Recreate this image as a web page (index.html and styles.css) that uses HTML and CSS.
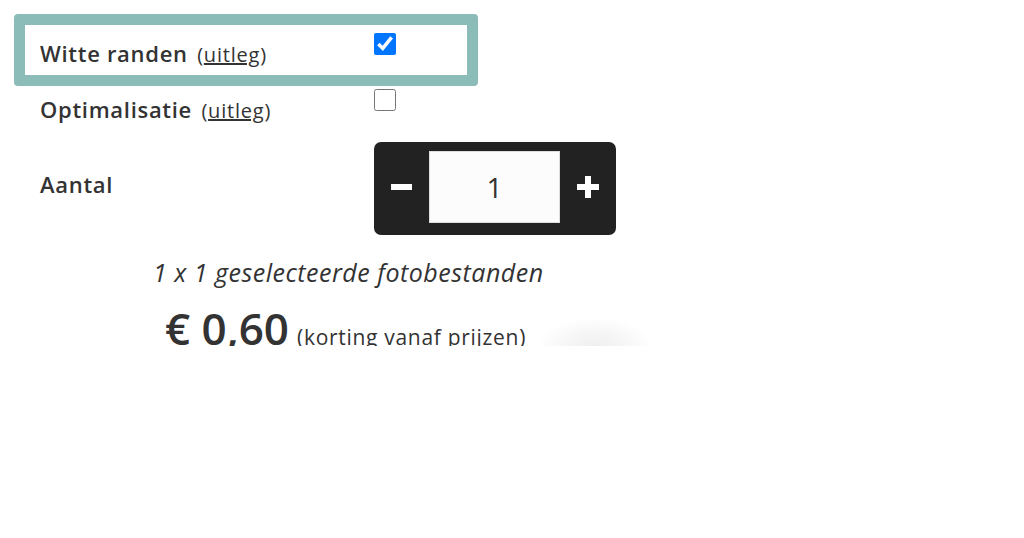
FILE: index.html
```html
<!DOCTYPE html>
<html lang="nl">

<head>
    <meta charset="UTF-8">
    <meta name="viewport" content="width=device-width, initial-scale=1.0">
    <title>Fotobestanden bestellen</title>
    <link rel="stylesheet" href="styles.css">
</head>

<body>
    <div class="panel">
        <!-- options -->
        <div class="option_row highlight">
            <label class="option_label" for="witte_randen">Witte randen <a href="#" class="uitleg">(<u>uitleg</u>)</a></label>
            <input type="checkbox" id="witte_randen" class="option_check" checked>
        </div>
        <div class="option_row plain">
            <label class="option_label" for="optimalisatie">Optimalisatie <a href="#" class="uitleg">(<u>uitleg</u>)</a></label>
            <input type="checkbox" id="optimalisatie" class="option_check">
        </div>

        <!-- quantity -->
        <div class="option_row amount">
            <span class="option_label">Aantal</span>
            <div class="qty_box">
                <button class="qty_btn" type="button" aria-label="minder">
                    <svg width="22" height="22" viewBox="0 0 22 22"><rect x="0" y="8" width="21" height="6" fill="#fff"/></svg>
                </button>
                <input type="text" class="qty_input" value="1">
                <button class="qty_btn" type="button" aria-label="meer">
                    <svg width="22" height="22" viewBox="0 0 22 22"><rect x="0" y="8" width="22" height="6" fill="#fff"/><rect x="8" y="0" width="6" height="22" fill="#fff"/></svg>
                </button>
            </div>
        </div>

        <p class="selection">1 x 1 geselecteerde fotobestanden</p>
        <div class="price_line">
            <span class="price">€ 0,60</span>
            <span class="discount">(korting vanaf prijzen)</span>
            <span class="glow"></span>
        </div>
    </div>
</body>

</html>
```

FILE: styles.css
```css
* {
    margin: 0;
    padding: 0;
    box-sizing: border-box;
}

body {
    background-color: #fff;
    font-family: "Open Sans", Arial, sans-serif;
    color: #333;
}

.panel {
    height: 346px;
    overflow: hidden;
    padding-top: 14px;
}

.option_row {
    display: flex;
    align-items: flex-start;
}

.option_label {
    width: 334px;
    font-size: 22px;
    font-weight: 600;
    letter-spacing: 0.7px;
    line-height: 28px;
    white-space: nowrap;
}

.uitleg {
    color: #333;
    font-size: 20px;
    font-weight: 400;
    letter-spacing: 0.8px;
    text-decoration: none;
    margin-left: 3px;
}

.option_check {
    width: 22px;
    height: 22px;
    margin: 0;
}

.highlight {
    margin-left: 14px;
    width: 464px;
    height: 72px;
    border: 11px solid #8cbcb7;
    border-radius: 4px;
    padding-left: 15px;
}

.highlight .option_label {
    padding-top: 14px;
}

.highlight .option_check {
    margin-top: 8px;
}

.plain {
    padding-left: 40px;
}

.plain .option_label {
    padding-top: 9px;
}

.plain .option_check {
    margin-top: 3px;
}

.amount {
    padding-left: 40px;
    margin-top: 17px;
}

.amount .option_label {
    padding-top: 28px;
}

.qty_box {
    display: grid;
    grid-template-columns: 55px 131px 56px;
    height: 93px;
    padding-top: 9px;
    background-color: #222;
    border-radius: 7px;
}

.qty_btn {
    height: 72px;
    border: none;
    background: none;
    display: flex;
    justify-content: center;
    align-items: center;
    cursor: pointer;
}

.qty_input {
    height: 72px;
    border: 1px solid #ddd;
    background-color: #fcfcfc;
    font-family: "Open Sans", Arial, sans-serif;
    font-size: 28px;
    color: #333;
    text-align: center;
    outline: none;
}

.selection {
    margin-top: 22px;
    padding-left: 153px;
    font-size: 25px;
    font-style: italic;
    letter-spacing: 0.5px;
    line-height: 30px;
}

.price_line {
    display: flex;
    align-items: baseline;
    margin-top: 16px;
    padding-left: 165px;
    height: 80px;
}

.price {
    font-size: 44px;
    font-weight: 600;
    line-height: 50px;
}

.discount {
    font-size: 21px;
    letter-spacing: 0.7px;
    margin-left: 8px;
}

.glow {
    align-self: flex-start;
    width: 115px;
    height: 60px;
    margin-left: 12px;
    margin-top: 14px;
    background: radial-gradient(ellipse at center, #efefef 0%, #f7f7f7 40%, rgba(255, 255, 255, 0) 70%);
}
```
